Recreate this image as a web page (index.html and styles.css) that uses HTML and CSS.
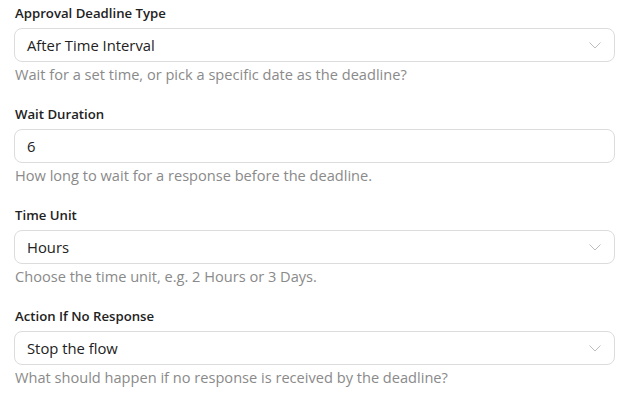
FILE: index.html
```html
<!DOCTYPE html>
<html>
<head>
<meta charset="utf-8">
<link rel="stylesheet" href="styles.css">
</head>
<body>
<div class="form">
  <div class="field">
    <div class="label">Approval Deadline Type</div>
    <div class="box select"><span>After Time Interval</span><svg class="chev" width="12" height="7" viewBox="0 0 12 7"><path d="M0.5 0.5l5.5 5.5 5.5-5.5" fill="none" stroke="#bdbdbd" stroke-width="1"/></svg></div>
    <div class="help">Wait for a set time, or pick a specific date as the deadline?</div>
  </div>
  <div class="field">
    <div class="label">Wait Duration</div>
    <div class="box"><span>6</span></div>
    <div class="help">How long to wait for a response before the deadline.</div>
  </div>
  <div class="field">
    <div class="label">Time Unit</div>
    <div class="box select"><span>Hours</span><svg class="chev" width="12" height="7" viewBox="0 0 12 7"><path d="M0.5 0.5l5.5 5.5 5.5-5.5" fill="none" stroke="#bdbdbd" stroke-width="1"/></svg></div>
    <div class="help">Choose the time unit, e.g. 2 Hours or 3 Days.</div>
  </div>
  <div class="field">
    <div class="label">Action If No Response</div>
    <div class="box select"><span>Stop the flow</span><svg class="chev" width="12" height="7" viewBox="0 0 12 7"><path d="M0.5 0.5l5.5 5.5 5.5-5.5" fill="none" stroke="#bdbdbd" stroke-width="1"/></svg></div>
    <div class="help">What should happen if no response is received by the deadline?</div>
  </div>
</div>
</body>
</html>
```
FILE: styles.css
```css
html, body {
  margin: 0;
  padding: 0;
  background: #ffffff;
}
body {
  font-family: "Open Sans", "Noto Sans", sans-serif;
  font-size: 14px;
  color: #222222;
}
.form {
  width: 601px;
  padding: 3px 0 0 14px;
  display: flex;
  flex-direction: column;
  gap: 20px;
}
.field {
  display: flex;
  flex-direction: column;
}
.label {
  font-size: 13.2px;
  font-weight: 600;
  line-height: 20px;
  color: #222222;
  padding-left: 1px;
}
.box {
  margin-top: 5px;
  height: 32px;
  border: 1px solid #dcdcdc;
  border-radius: 8px;
  display: flex;
  align-items: center;
  justify-content: space-between;
  padding: 0 13px 0 12px;
  font-size: 14.8px;
  line-height: 20px;
  color: #222222;
}
.chev {
  display: block;
}
.help {
  margin-top: 2px;
  font-size: 14.6px;
  line-height: 20px;
  color: #8a8a8a;
  padding-left: 1px;
}
```
